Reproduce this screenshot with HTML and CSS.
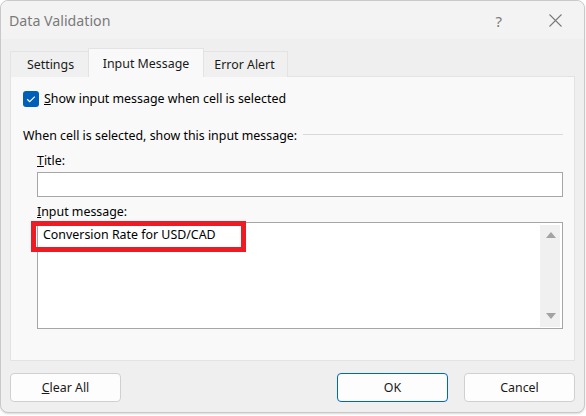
FILE: index.html
```html
<!DOCTYPE html>
<html>
<head>
<meta charset="utf-8">
<link rel="stylesheet" href="styles.css">
</head>
<body>
<div class="window">
  <div class="titlebar">
    <span class="title">Data Validation</span>
    <span class="help">?</span>
    <svg class="close" width="13" height="13" viewBox="0 0 13 13"><path d="M0.5 0.5L12.5 12.5M12.5 0.5L0.5 12.5" stroke="#7a7a7a" stroke-width="1.1" fill="none"/></svg>
  </div>
  <div class="content">
    <div class="tabs">
      <div class="tab t-settings">Settings</div>
      <div class="tab t-input active">Input Message</div>
      <div class="tab t-error">Error Alert</div>
    </div>
    <div class="panel">
      <div class="checkrow">
        <span class="checkbox"><svg width="16" height="16" viewBox="0 0 16 16"><path d="M4.2 8.3L6.7 10.7L11.8 5.6" stroke="#fff" stroke-width="1.2" fill="none"/></svg></span>
        <span class="label"><u>S</u>how input message when cell is selected</span>
      </div>
      <div class="grouprow">
        <span class="grouptext">When cell is selected, show this input message:</span>
        <span class="groupline"></span>
      </div>
      <div class="fields">
        <div class="fieldlabel"><u>T</u>itle:</div>
        <div class="input"></div>
        <div class="fieldlabel second"><u>I</u>nput message:</div>
        <div class="textarea">
          <div class="msg">Conversion Rate for USD/CAD</div>
          <div class="scroll">
            <span class="arrow up"></span>
            <span class="arrow down"></span>
          </div>
          <div class="highlight"></div>
        </div>
      </div>
    </div>
    <div class="buttons">
      <div class="btn"><u>C</u>lear All</div>
      <div class="spacer"></div>
      <div class="btn primary">OK</div>
      <div class="btn">Cancel</div>
    </div>
  </div>
</div>
</body>
</html>
```
FILE: styles.css
```css
* { box-sizing: border-box; }
html, body { margin: 0; padding: 0; background: #ffffff; }
body {
  font-family: "Noto Sans", "Open Sans", sans-serif;
  font-size: 12.4px;
  color: #000;
  width: 586px;
  height: 416px;
  overflow: hidden;
}
.window {
  width: 585px;
  height: 413px;
  border: 1px solid #c9c9c9;
  border-radius: 8px;
  background: #efefef;
  display: flex;
  flex-direction: column;
  overflow: hidden;
  box-shadow: 0 1px 2px rgba(0,0,0,0.15);
}
.titlebar {
  height: 38px;
  flex: none;
  background: #f3f3f3;
  display: flex;
  align-items: center;
  padding-left: 8px;
}
.title {
  font-size: 14.2px;
  color: #7a7a7a;
  flex: 1;
  margin-top: 1px;
}
.help {
  font-size: 15px;
  color: #7a7a7a;
  margin-right: 47px;
  margin-top: 1px;
}
.close { margin-right: 22px; }
.content {
  flex: 1;
  padding: 10px 9px 0 9px;
  display: flex;
  flex-direction: column;
}
.tabs {
  display: flex;
  align-items: flex-end;
  height: 28px;
  margin-bottom: -1px;
  position: relative;
  z-index: 1;
}
.tab {
  height: 26px;
  border: 1px solid #e3e3e3;
  border-bottom: none;
  background: #f0f0f0;
  display: flex;
  align-items: center;
  justify-content: center;
  color: #1a1a1a;
  font-size: 12.4px;
}
.t-settings { width: 78px; border-right: none; padding-left: 2px; }
.t-input { width: 116px; }
.t-error { width: 84px; border-left: none; padding-right: 2px; }
.tab.active {
  height: 29px;
  background: #f9f9f9;
  border-color: #e3e3e3;
}
.panel {
  height: 285px;
  border: 1px solid #e3e3e3;
  background: #f9f9f9;
  padding: 13px 11px 0 12px;
  display: flex;
  flex-direction: column;
}
.checkrow {
  display: flex;
  align-items: center;
  height: 17px;
}
.checkbox {
  width: 16px;
  height: 16px;
  border-radius: 3px;
  background: #005fb8;
  display: inline-flex;
  margin-right: 5px;
}
.label { font-size: 12.4px; }
.grouprow {
  display: flex;
  align-items: center;
  margin-top: 19px;
  height: 18px;
}
.grouptext { white-space: nowrap; }
.groupline {
  flex: 1;
  height: 1px;
  background: #d9d9d9;
  margin-left: 6px;
  margin-top: -2px;
}
.fields {
  padding-left: 14px;
  display: flex;
  flex-direction: column;
}
.fieldlabel {
  height: 18px;
  margin-top: 8px;
  line-height: 18px;
}
.fieldlabel.second { margin-top: 6px; }
.input {
  height: 25px;
  margin-top: 2px;
  border: 1px solid #a6a6a6;
  background: #fff;
}
.textarea {
  position: relative;
  height: 107px;
  margin-top: 1px;
  border: 1px solid #a6a6a6;
  background: #fff;
  display: flex;
}
.msg {
  flex: 1;
  padding: 3px 0 0 5px;
}
.scroll {
  width: 20px;
  margin: 2px 2px 1px 0;
  background: #f0f0f0;
  display: flex;
  flex-direction: column;
  justify-content: space-between;
  align-items: center;
  padding: 7px 0 8px 1px;
}
.arrow {
  width: 0;
  height: 0;
  border-left: 5px solid transparent;
  border-right: 5px solid transparent;
}
.arrow.up { border-bottom: 6px solid #a3a3a3; }
.arrow.down { border-top: 6px solid #a3a3a3; }
.highlight {
  position: absolute;
  left: -7px;
  top: -2px;
  width: 215px;
  height: 31px;
  border: 5px solid #ed1c24;
}
.buttons {
  display: flex;
  margin-top: 12px;
  height: 29px;
}
.spacer { flex: 1; }
.btn {
  width: 111px;
  height: 29px;
  border: 1px solid #d0d0d0;
  border-radius: 4px;
  background: #fdfdfd;
  display: flex;
  align-items: center;
  justify-content: center;
  color: #1a1a1a;
}
.btn.primary {
  border-color: #0067c0;
  margin-right: 16px;
}
```
